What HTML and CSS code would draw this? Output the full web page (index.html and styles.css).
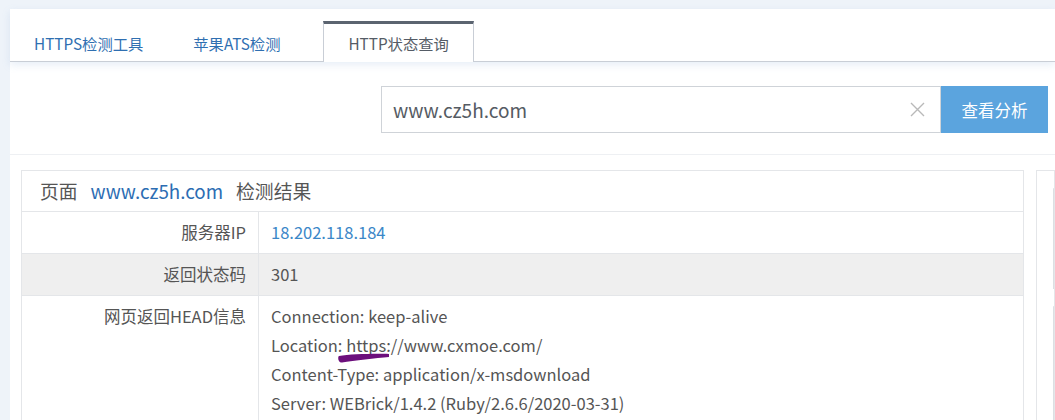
FILE: index.html
```html
<!DOCTYPE html>
<html lang="zh-CN">
<head>
<meta charset="utf-8">
<title>HTTP状态查询</title>
<link rel="stylesheet" href="styles.css">
</head>
<body>
<div class="page">
  <div class="tabbar">
    <a class="tab">HTTPS检测工具</a>
    <a class="tab">苹果ATS检测</a>
    <a class="tab active">HTTP状态查询</a>
  </div>
  <div class="search">
    <div class="input">
      <span class="input-text">www.cz5h.com</span>
      <svg class="clear" width="15" height="15" viewBox="0 0 15 15"><path d="M1 1 L14 14 M14 1 L1 14" stroke="#b9b9b9" stroke-width="1.4" fill="none"/></svg>
    </div>
    <button class="btn">查看分析</button>
  </div>
  <div class="content">
    <div class="result">
      <div class="result-head">页面<a class="domain">www.cz5h.com</a>检测结果</div>
      <div class="row">
        <div class="label">服务器IP</div>
        <div class="value ip">18.202.118.184</div>
      </div>
      <div class="row alt">
        <div class="label">返回状态码</div>
        <div class="value">301</div>
      </div>
      <div class="row">
        <div class="label">网页返回HEAD信息</div>
        <div class="value">
          <div>Connection: keep-alive</div>
          <div>Location: <span class="marked">https<svg class="scribble" width="52" height="10" viewBox="0 0 52 10"><path d="M1 3 C 12 1, 38 0.5, 51 1 L 51 4 C 38 5, 16 7.5, 4 9.5 C 0 10, -0.5 4, 1 3 Z" fill="#6c0f7c"/></svg></span>://www.cxmoe.com/</div>
          <div>Content-Type: application/x-msdownload</div>
          <div>Server: WEBrick/1.4.2 (Ruby/2.6.6/2020-03-31)</div>
        </div>
      </div>
    </div>
    <div class="side">
      <div class="side-box"></div>
      <div class="side-box tall"></div>
    </div>
  </div>
</div>
</body>
</html>
```

FILE: styles.css
```css
html, body {
  margin: 0;
  padding: 0;
}
body {
  background: #eef3f9;
  font-family: "Noto Sans CJK SC", "Noto Sans", sans-serif;
  color: #555;
  height: 420px;
  overflow: hidden;
}
.page {
  padding: 9px 0 0 10px;
}
.tabbar {
  background: #fff;
  height: 52px;
  border-bottom: 1px solid #c9ced6;
  display: flex;
  align-items: flex-end;
  position: relative;
  z-index: 1;
  box-shadow: 0 3px 8px rgba(120, 160, 210, 0.18);
}
.tab {
  display: block;
  height: 38px;
  line-height: 38px;
  padding: 0 24px;
  margin-bottom: -1px;
  border: 1px solid transparent;
  border-top: 3px solid transparent;
  border-bottom: 0;
  font-size: 15.3px;
  color: #2f6fb1;
  cursor: pointer;
}
.tab:first-child {
  margin-left: -1px;
}
.tab.active {
  margin-left: 18px;
  border-color: #c9ced6;
  border-top-color: #5b6470;
  color: #555c66;
  background: #fff;
}
.search {
  background: #fff;
  height: 93px;
  box-sizing: border-box;
  padding: 24px 7px 0 0;
  display: flex;
  justify-content: flex-end;
  align-items: flex-start;
  border-bottom: 1px solid #eef0f3;
}
.input {
  width: 560px;
  height: 47px;
  box-sizing: border-box;
  border: 1px solid #cfd3d8;
  display: flex;
  align-items: center;
  padding: 0 15px 0 11px;
}
.input-text {
  flex: 1;
  font-size: 19px;
  color: #555b63;
}
.clear {
  display: block;
}
.btn {
  width: 107px;
  height: 47px;
  border: 0;
  margin: 0;
  background: #5ba4de;
  color: #fff;
  font-family: inherit;
  font-size: 16.5px;
  padding: 0;
}
.content {
  background: #fff;
  padding: 15px 0 0 11px;
  display: flex;
  gap: 12px;
  height: 300px;
  overflow: hidden;
}
.result {
  width: 1003px;
  flex: none;
  box-sizing: border-box;
  border: 1px solid #e4e6e9;
  border-bottom: 0;
}
.result-head {
  height: 40px;
  line-height: 40px;
  padding-left: 18px;
  font-size: 18.8px;
  color: #555;
  border-bottom: 1px solid #e4e6e9;
}
.domain {
  color: #2c6db3;
  margin: 0 13px 0 13px;
}
.row {
  display: grid;
  grid-template-columns: 237px 1fr;
  border-bottom: 1px solid #e4e6e9;
  font-size: 16.5px;
  line-height: 29px;
}
.row.alt {
  background: #efefef;
}
.label {
  text-align: right;
  padding: 6px 12px 6px 0;
  border-right: 1px solid #e4e6e9;
  color: #555;
}
.value {
  padding: 6px 12px;
  color: #555;
}
.value.ip {
  color: #3b87c8;
}
.marked {
  position: relative;
}
.scribble {
  position: absolute;
  left: -8px;
  top: 20px;
}
.side {
  flex: 1;
  border: 1px solid #e4e6e9;
  border-bottom: 0;
  padding: 17px 0 0 16px;
  display: flex;
  flex-direction: column;
  gap: 17px;
}
.side-box {
  height: 122px;
  border-left: 1px solid #dcdfe3;
  border-top: 1px solid #eceef1;
}
.side-box.tall {
  height: 200px;
}
```
